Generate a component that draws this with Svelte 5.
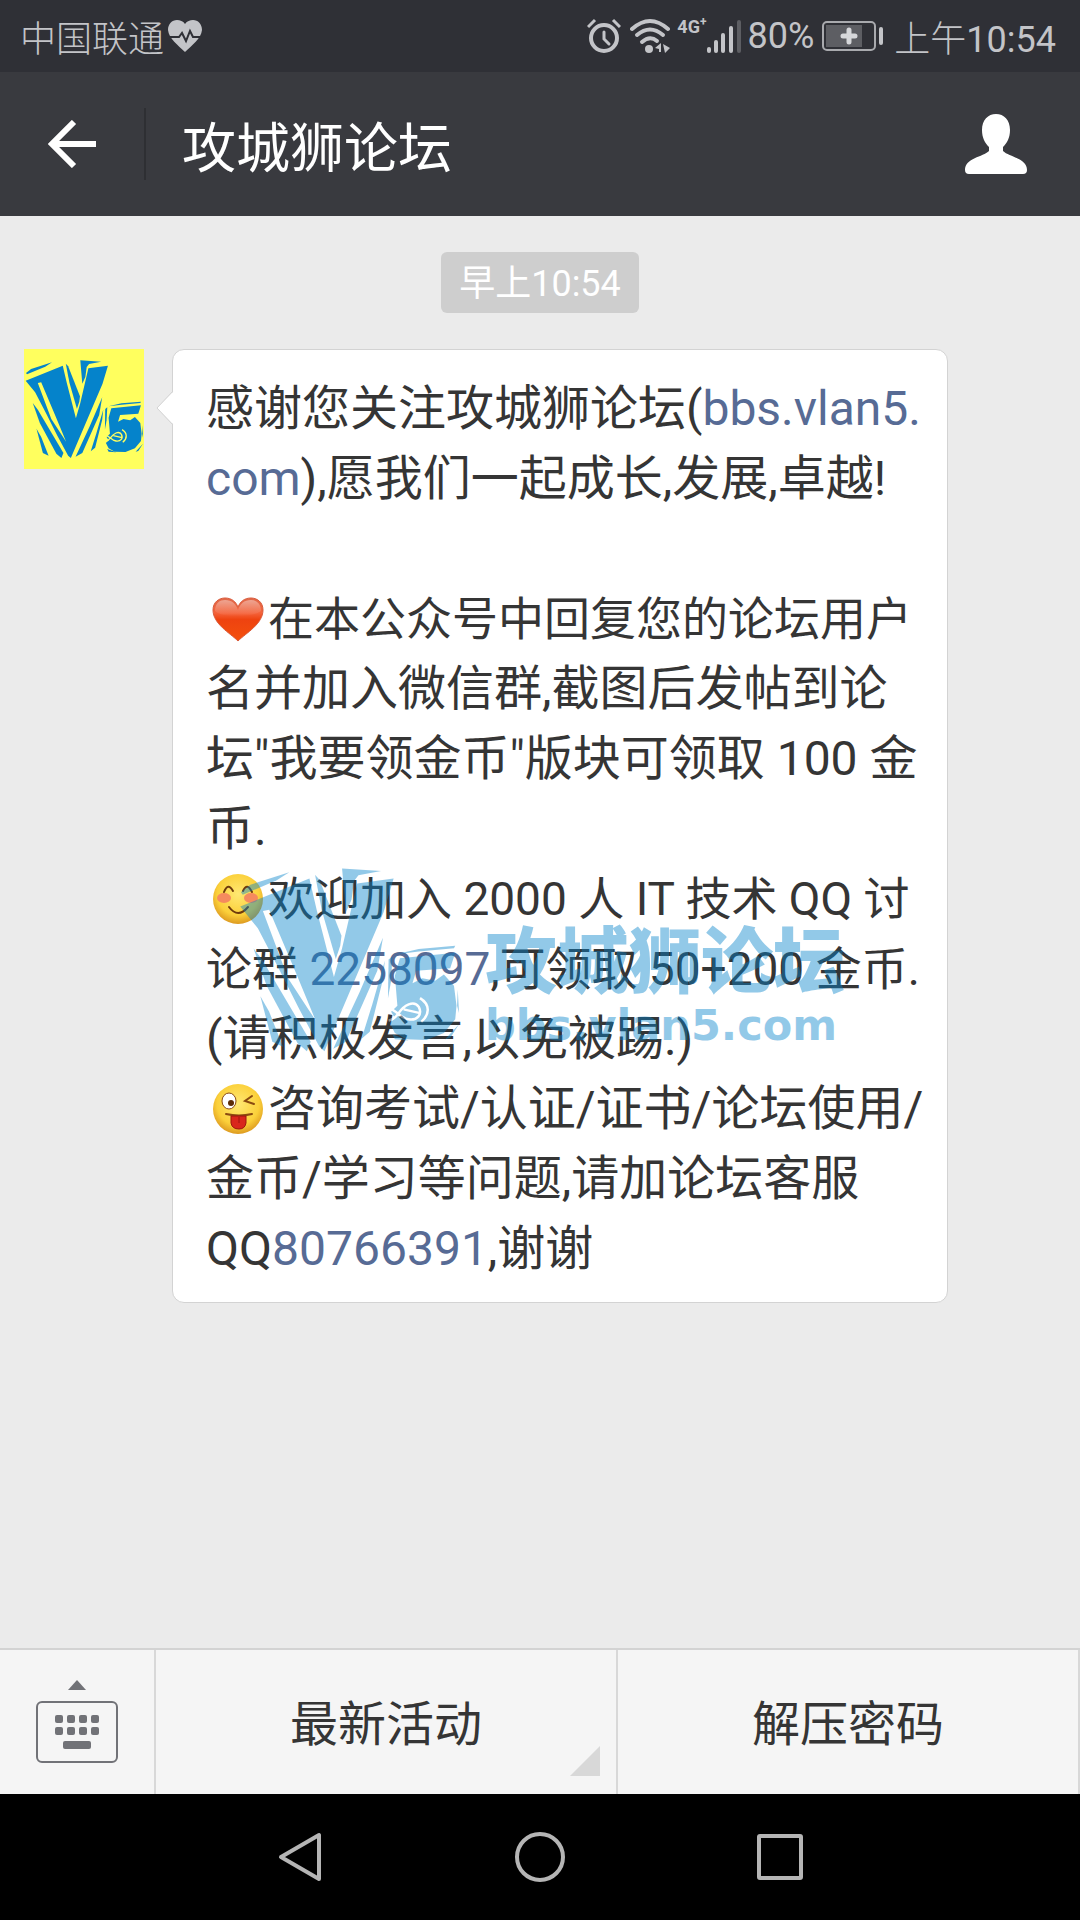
<script>
  const title = "攻城狮论坛";
  const bars = [
    { x: 1, height: 6 },
    { x: 8, height: 13 },
    { x: 15, height: 20 },
    { x: 23, height: 27 },
    { x: 31, height: 33, empty: true },
  ];
  const keyColumns = [19, 31, 43, 55];
</script>

<svelte:head>
  <title>{title}</title>
</svelte:head>

{#snippet logo()}
  <svg class="logo" viewBox="14 38 350 300" preserveAspectRatio="none" aria-hidden="true">
    <path d="M17 80 L32 68 L94 48 L74 61 L20 84Z" />
    <path
      fill-rule="evenodd"
      d="M16 103 L126 58 L138 110 L165 216 L178 170 L202 66 L260 58 L244 112 L150 335 L142 328 L110 268 L76 200 L44 138Z
        M52 110 L92 218 L136 286 L104 208 L62 108Z" />
    <path d="M135 52 L142 60 L177 150 L175 166 L168 187 L146 110Z" />
    <path d="M178 42 L240 46 L204 53 L197 62 L193 92 L184 112Z" />
    <path d="M37 170 L52 190 L128 320 L122 335 L107 322 L58 230Z" />
    <path d="M48 247 L62 272 L84 328 L67 320Z" />
    <path d="M243 153 L234 206 L184 320 L164 331 L206 240Z" />
    <path d="M246 190 L243 220 L222 304 L209 315 L226 260Z" />
    <path d="M262 180 L300 171 L358 166 L356 170 L300 175Z" />
    <path d="M252 188 L258 183 L256 222 L251 250Z" />
    <path
      d="M270 186 L358 177 L350 202 L296 206 L290 226 L306 218 L326 222 L340 212 L356 230 L360 262
        L358 284 L340 306 L312 317 L280 316 L262 306 L254 290 L262 282 L256 272 L266 262 L262 214Z" />
    <path d="M258 308 L284 318 L262 316Z M364 292 L350 314 L342 316Z M362 236 L364 274 L361 262Z" />
    <path class="cut" d="M252 266 C266 270 270 282 284 284 C298 286 306 276 300 264 C292 252 276 262 268 274 C264 280 260 284 252 286 M276 268 L302 274" />
    <path class="cut" d="M302 250 C318 260 318 276 304 288" />
  </svg>
{/snippet}

<div class="screen">
  <div class="status">
    <div class="carrier">
      <span>中国联通</span>
      <svg width="34" height="32" viewBox="0 0 34 32" aria-hidden="true">
        <path fill="#c3c4c8" d="M17 32 C10 25 1 19 0 10 C0 4 4 0 9 0 C12 0 15 1 17 4 C19 1 22 0 25 0 C30 0 34 4 34 10 C33 19 24 25 17 32Z" />
        <path fill="none" stroke="#2f3036" stroke-width="2" d="M0 17 H11 L14 13 L18 21 L22 11 L25 17 H34" />
      </svg>
    </div>
    <div class="indicators">
      <svg width="34" height="36" viewBox="0 0 34 36" aria-hidden="true">
        <g fill="none" stroke="#c3c4c8" stroke-linecap="round">
          <circle cx="17" cy="20" r="13" stroke-width="4" />
          <path stroke-width="3" d="M17 14 V21 L22 26" />
          <path stroke-width="3" stroke-linecap="butt" d="M1 9 L8 2 M26 2 L33 9" />
        </g>
      </svg>
      <svg class="wifi" width="40" height="36" viewBox="0 0 40 36" aria-hidden="true">
        <g fill="none" stroke="#c3c4c8" stroke-width="4" stroke-linecap="round">
          <path d="M2 11 Q20 -5 38 11" />
          <path d="M7 17 Q20 6 33 17" />
          <path d="M12 24 Q20 17 27 23" />
        </g>
        <g fill="#c3c4c8">
          <circle cx="19" cy="31" r="4" />
          <path d="M25 30 L31 25 V34 H29 V31Z M33 26 L40 30 L35 35Z" />
        </g>
      </svg>
      <div class="network">
        <span>4G<sup>+</sup></span>
        <svg width="35" height="34" viewBox="0 0 35 34" aria-hidden="true">
          {#each bars as bar}
            <rect x={bar.x} y={34 - bar.height} width="4" height={bar.height} rx="2" fill={bar.empty ? "#5d5e63" : "#c3c4c8"} />
          {/each}
        </svg>
      </div>
      <span class="percent">80%</span>
      <svg class="battery" width="62" height="30" viewBox="0 0 62 30" aria-hidden="true">
        <rect x="1" y="1" width="52" height="28" rx="4" fill="none" stroke="#a9aaae" stroke-width="2" />
        <rect x="4" y="4" width="36" height="22" fill="#5d5e63" />
        <path stroke="#d6d7da" stroke-width="5" stroke-linecap="round" d="M21 15 H33 M27 9 V21" />
        <rect x="57" y="6" width="4" height="18" rx="2" fill="#c3c4c8" />
      </svg>
      <span>上午<span class="digits">10:54</span></span>
    </div>
  </div>

  <header>
    <button class="back" aria-label="返回">
      <svg width="48" height="48" viewBox="0 0 48 48">
        <path fill="none" stroke="#fff" stroke-width="6" d="M26 2 L4 24 L26 46 M4 24 H48" />
      </svg>
    </button>
    <h1>{title}</h1>
    <button class="profile" aria-label="资料">
      <svg width="62" height="60" viewBox="0 0 62 60">
        <path fill="#fff" d="M31 0 C39 0 45 6 45 16 C45 24 42 29 38 33 V37 C44 43 62 44 62 56 Q62 60 58 60 H4 Q0 60 0 56 C0 44 18 43 24 37 V33 C20 29 17 24 17 16 C17 6 23 0 31 0Z" />
      </svg>
    </button>
  </header>

  <main>
    <time>早上10:54</time>
    <div class="message">
      <div class="avatar">{@render logo()}</div>
      <div class="bubble">
        <svg class="tail" width="18" height="34" viewBox="0 0 18 34" aria-hidden="true">
          <path fill="#fff" d="M18 0 L1 17 L18 34Z" />
          <path fill="none" stroke="#d3d3d3" d="M17 0 L1 17 L17 34" />
        </svg>
        <p>感谢您关注攻城狮论坛(<a href="#bbs">bbs.vlan5.</a></p>
        <p><a href="#bbs">com</a>),愿我们一起成长,发展,卓越!</p>
        <p>&nbsp;</p>
        <p class="tight">
          <svg class="emoji" width="52" height="52" viewBox="0 0 52 52" aria-hidden="true">
            <defs>
              <linearGradient id="heart" x1="0" y1="0" x2="0" y2="1">
                <stop offset="0" stop-color="#e0694a" />
                <stop offset="0.35" stop-color="#f4623a" />
                <stop offset="0.5" stop-color="#ee4310" />
                <stop offset="1" stop-color="#f4500c" />
              </linearGradient>
              <linearGradient id="shine" x1="0" y1="0" x2="0" y2="1">
                <stop offset="0" stop-color="#fff" stop-opacity="0.4" />
                <stop offset="1" stop-color="#fff" stop-opacity="0" />
              </linearGradient>
            </defs>
            <path fill="url(#heart)" stroke="#d95b3c" d="M26 48 C18 40 1 31 1 17 C1 9 7 5 13 5 C20 5 24 9 26 14 C28 9 32 5 39 5 C45 5 51 9 51 17 C51 31 34 40 26 48Z" />
            <path fill="url(#shine)" d="M3 18 C3 10 8 7 13 7 C20 7 24 11 26 17 C28 11 32 7 39 7 C44 7 49 10 49 18 C40 25 10 25 3 18Z" />
          </svg>在本公众号中回复您的论坛用户
        </p>
        <p>名并加入微信群,截图后发帖到论</p>
        <p>坛"我要领金币"版块可领取 100 金</p>
        <p>币.</p>
        <p class="tight">
          <svg class="emoji" width="52" height="52" viewBox="0 0 52 52" aria-hidden="true">
            <defs>
              <radialGradient id="face" cx="0.5" cy="0.4" r="0.6">
                <stop offset="0" stop-color="#ffe873" />
                <stop offset="0.7" stop-color="#fbd03a" />
                <stop offset="1" stop-color="#dd9a20" />
              </radialGradient>
            </defs>
            <circle cx="26" cy="26" r="25" fill="url(#face)" />
            <ellipse cx="12" cy="25" rx="7" ry="5" fill="#f58a5e" />
            <ellipse cx="39" cy="25" rx="7" ry="5" fill="#f58a5e" />
            <path fill="none" stroke="#6f3a0c" stroke-width="2" stroke-linecap="round" d="M12 19 Q16 9 21 18 M31 18 Q35 9 40 19 M17 34 Q26 46 36 34" />
          </svg>欢迎加入 2000 人 IT 技术 QQ 讨
        </p>
        <p class="tight">论群 <a href="#group">2258097</a>,可领取 50+200 金币.</p>
        <p>(请积极发言,以免被踢.)</p>
        <p>
          <svg class="emoji" width="52" height="52" viewBox="0 0 52 52" aria-hidden="true">
            <circle cx="26" cy="26" r="25" fill="url(#face)" />
            <ellipse cx="17" cy="18" rx="7" ry="8" fill="#fff" stroke="#8a4a10" />
            <circle cx="19" cy="20" r="3" fill="#5c2c08" />
            <path fill="none" stroke="#8a4a10" stroke-width="2" stroke-linecap="round" d="M40 13 L33 18 L42 21 M14 31 Q27 34 40 31" />
            <path fill="#d9261c" stroke="#9c150f" d="M19 33 H34 V40 Q33 46 27 46 Q20 46 19 40Z" />
            <path stroke="#9c150f" d="M27 34 V40" />
          </svg>咨询考试/认证/证书/论坛使用/
        </p>
        <p>金币/学习等问题,请加论坛客服</p>
        <p>QQ<a href="#service">80766391</a>,谢谢</p>
        <div class="watermark">
          {@render logo()}
          <div class="brand">
            <strong>{title}</strong>
            <span>bbs.vlan5.com</span>
          </div>
        </div>
      </div>
    </div>
  </main>

  <footer>
    <button class="keyboard" aria-label="键盘">
      <svg width="82" height="84" viewBox="0 0 82 84">
        <path fill="#717277" d="M41 0 L50 10 H32Z" />
        <rect x="1" y="22" width="80" height="60" rx="5" fill="none" stroke="#717277" stroke-width="2" />
        <g fill="#717277">
          {#each keyColumns as x}
            <rect {x} y="35" width="8" height="8" rx="2" />
            <rect {x} y="47" width="8" height="8" rx="2" />
          {/each}
          <rect x="27" y="61" width="28" height="8" rx="2" />
        </g>
      </svg>
    </button>
    <button class="menu more">最新活动</button>
    <button class="menu">解压密码</button>
  </footer>

  <nav>
    <button aria-label="后退">
      <svg width="52" height="52" viewBox="0 0 52 52">
        <path d="M45 4 V48 L7 26Z" />
      </svg>
    </button>
    <button aria-label="主屏幕">
      <svg width="52" height="52" viewBox="0 0 52 52">
        <circle cx="26" cy="26" r="23" />
      </svg>
    </button>
    <button aria-label="最近任务">
      <svg width="52" height="52" viewBox="0 0 52 52">
        <rect x="5" y="5" width="42" height="42" rx="1" />
      </svg>
    </button>
  </nav>
</div>

<style>
  :global(body) {
    background: #ebebeb;
  }
  .screen {
    display: flex;
    flex-direction: column;
    min-height: 100vh;
    font-family: Roboto, "Noto Sans CJK SC", sans-serif;
    color: #353535;
  }
  svg {
    display: block;
    flex-shrink: 0;
  }
  button {
    display: flex;
    align-items: center;
    justify-content: center;
    margin: 0;
    padding: 0;
    border: 0;
    background: none;
    font: inherit;
    color: inherit;
  }
  a {
    color: #576b95;
    text-decoration: none;
  }

  .status {
    display: flex;
    align-items: center;
    justify-content: space-between;
    box-sizing: border-box;
    height: 72px;
    padding: 0 24px 0 20px;
    background: #2f3036;
    color: #c3c4c8;
    font-size: 36px;
    font-weight: 300;
    white-space: nowrap;
  }
  .carrier,
  .indicators {
    display: flex;
    align-items: center;
  }
  .carrier {
    gap: 4px;
  }
  .wifi {
    margin-left: 9px;
  }
  .network {
    display: flex;
    align-items: flex-end;
    margin-left: 7px;
  }
  .network span {
    align-self: flex-start;
    font-size: 18px;
    line-height: 16px;
    font-weight: 700;
  }
  .network sup {
    font-size: 12px;
    line-height: 1px;
  }
  .percent,
  .digits {
    font-weight: 400;
  }
  .percent {
    margin: 0 8px 0 6px;
  }
  .battery {
    margin-right: 10px;
  }

  header {
    display: flex;
    align-items: center;
    height: 144px;
    background: #393a3f;
    color: #fff;
  }
  .back {
    box-sizing: border-box;
    width: 146px;
    height: 72px;
    border-right: 2px solid #2e2f33;
  }
  h1 {
    flex: 1;
    margin: 0;
    padding-left: 36px;
    font-size: 54px;
    font-weight: 400;
  }
  .profile {
    width: 168px;
    height: 144px;
  }

  main {
    flex: 1;
    display: flex;
    flex-direction: column;
    align-items: center;
    gap: 36px;
    padding: 36px 24px;
  }
  time {
    padding: 4px 18px 0;
    border-radius: 6px;
    background: #cecece;
    color: #fff;
    font-size: 36px;
    line-height: 57px;
  }
  .message {
    display: flex;
    align-items: flex-start;
    align-self: stretch;
    gap: 28px;
  }
  .avatar {
    box-sizing: border-box;
    width: 120px;
    height: 120px;
    padding: 10px 1px;
    background: #ffff5e;
    color: #0583cb;
  }
  .logo {
    width: 100%;
    height: 100%;
    fill: currentColor;
  }
  .cut {
    fill: none;
    stroke: #fff;
    stroke-width: 4;
  }
  .avatar .cut {
    stroke: #ffff5e;
  }
  .bubble {
    position: relative;
    box-sizing: border-box;
    width: 776px;
    padding: 24px 33px 18px;
    border: 1px solid #d3d3d3;
    border-radius: 12px;
    background: #fff;
    font-size: 48px;
    line-height: 70px;
    white-space: nowrap;
  }
  .tail {
    position: absolute;
    top: 41px;
    left: -17px;
  }
  p {
    height: 70px;
    margin: 0;
  }
  .tight {
    font-size: 46px;
  }
  .emoji {
    display: inline-block;
    margin: 0 4px 0 6px;
    vertical-align: -10px;
  }
  .watermark {
    position: absolute;
    top: 516px;
    left: 66px;
    display: flex;
    align-items: flex-end;
    gap: 26px;
    color: #0583cb;
    opacity: 0.43;
    pointer-events: none;
  }
  .watermark .logo {
    width: 220px;
    height: 187px;
  }
  .brand {
    display: flex;
    flex-direction: column;
    padding-bottom: 4px;
    font-size: 72px;
    font-weight: 900;
    line-height: 76px;
  }
  .brand strong {
    font-weight: 900;
  }
  .brand span {
    font-family: "DejaVu Sans", sans-serif;
    font-size: 43px;
    font-weight: 700;
    line-height: 48px;
  }

  footer {
    display: flex;
    height: 146px;
    border-top: 2px solid #d3d3d3;
    background: #f5f5f5;
    box-sizing: border-box;
  }
  footer button {
    box-sizing: border-box;
    border-right: 2px solid #d8d8d8;
  }
  .keyboard {
    width: 156px;
  }
  .menu {
    position: relative;
    flex: 1;
    padding-bottom: 4px;
    font-size: 48px;
  }
  .more::after {
    content: "";
    position: absolute;
    right: 16px;
    bottom: 18px;
    border-left: 30px solid transparent;
    border-bottom: 30px solid #d8d8d8;
  }

  nav {
    display: flex;
    height: 126px;
    padding: 0 180px;
    background: #000;
  }
  nav button {
    flex: 1;
  }
  nav svg {
    fill: none;
    stroke: #b5b5b5;
    stroke-width: 4;
    stroke-linejoin: round;
  }
</style>
